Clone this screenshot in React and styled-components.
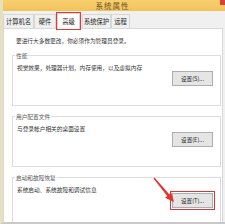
import React from 'react'
import styled, { createGlobalStyle } from 'styled-components'

const Global = createGlobalStyle`
    html, body { margin: 0; padding: 0; background: #f0f0f0; }
    body { font-family: "Noto Sans CJK SC", "Liberation Sans", sans-serif; }
`

const Window = styled.div`
    position: relative;
    width: 225px;
    height: 224px;
    overflow: hidden;
    box-sizing: border-box;
    border-left: 3px solid #e6e1bd;
    border-bottom: 2px solid #c9c9c9;
    background: #f0f0f0;
    display: flex;
    flex-direction: column;
`

const TitleBar = styled.div`
    height: 11px;
    flex-shrink: 0;
    margin-left: -3px;
    background: linear-gradient(#f7cf70, #f3c35a);
    display: flex;
    align-items: center;
    justify-content: center;
    position: relative;
    font-size: 7.5px;
    letter-spacing: 1px;
    color: #6b5226;
`

const Close = styled.div`
    position: absolute;
    right: 0;
    top: 0;
    width: 5px;
    height: 5px;
    background: #d8403a;
`

const TabBar = styled.div`
    height: 17px;
    flex-shrink: 0;
    display: flex;
    align-items: flex-end;
`

const Tab = styled.div`
    box-sizing: border-box;
    width: ${(p) => p.w}px;
    height: ${(p) => (p.active ? 16 : 14)}px;
    margin-bottom: ${(p) => (p.active ? -1 : 0)}px;
    margin-left: ${(p) => p.ml || 0}px;
    background: ${(p) => (p.active ? '#fff' : '#f0f0f0')};
    border: 1px solid #d6d6d6;
    border-bottom: none;
    outline: ${(p) => (p.active ? '1.5px solid #e23a35' : 'none')};
    display: flex;
    align-items: center;
    justify-content: center;
    font-size: 6.3px;
    color: #222;
    position: relative;
    z-index: ${(p) => (p.active ? 2 : 1)};
`

const Panel = styled.div`
    flex: 1;
    margin-right: 2px;
    background: #fff;
    border: 1px solid #d9d9d9;
    padding: 8px 1px 0 8px;
    display: flex;
    flex-direction: column;
`

const Intro = styled.div`
    font-size: 5.7px;
    line-height: 7px;
    margin-left: 4px;
    color: #333;
    white-space: nowrap;
`

const Group = styled.fieldset`
    box-sizing: border-box;
    height: 54px;
    margin: ${(p) => (p.first ? 8 : 7)}px 0 0 0;
    padding: 5px 7px 6px 4px;
    border: 1px solid #dcdcdc;
    display: flex;
    flex-direction: column;
    min-width: 0;
    flex-shrink: 0;
`

const Legend = styled.legend`
    font-size: 5.7px;
    line-height: 7px;
    padding: 0 1px;
    margin-left: -2px;
    color: #555;
`

const Desc = styled.div`
    font-size: 5.7px;
    line-height: 7px;
    color: #333;
    white-space: nowrap;
`

const Button = styled.div`
    box-sizing: border-box;
    margin-top: auto;
    align-self: flex-end;
    width: 41px;
    height: 15px;
    border: 1px solid #adadad;
    background: #e5e5e5;
    display: flex;
    align-items: center;
    justify-content: center;
    font-size: 5.6px;
    color: #222;
    outline: ${(p) => (p.marked ? '1.5px solid #d8363a' : 'none')};
    outline-offset: 1px;
`

const Arrow = styled.svg`
    position: absolute;
    left: 147px;
    top: 176px;
    width: 30px;
    height: 28px;
    overflow: visible;
`

const tabs = [
    { label: '计算机名', w: 31 },
    { label: '硬件', w: 22 },
    { label: '高级', w: 23, active: true, ml: 1 },
    { label: '系统保护', w: 29, ml: 2 },
    { label: '远程', w: 19 },
]

const groups = [
    { title: '性能', desc: '视觉效果，处理器计划，内存使用，以及虚拟内存', btn: '设置(S)...' },
    { title: '用户配置文件', desc: '与登录帐户相关的桌面设置', btn: '设置(E)...' },
    { title: '启动和故障恢复', desc: '系统启动、系统故障和调试信息', btn: '设置(T)...', marked: true },
]

const App = () => {
    return (
        <>
            <Global />
            <Window>
                <TitleBar>
                    系统属性
                    <Close />
                </TitleBar>
                <TabBar>
                    {tabs.map((t) => (
                        <Tab key={t.label} w={t.w} ml={t.ml} active={t.active}>{t.label}</Tab>
                    ))}
                </TabBar>
                <Panel>
                    <Intro>要进行大多数更改，你必须作为管理员登录。</Intro>
                    {groups.map((g, i) => (
                        <Group key={g.title} first={i === 0}>
                            <Legend>{g.title}</Legend>
                            <Desc>{g.desc}</Desc>
                            <Button marked={g.marked}>{g.btn}</Button>
                        </Group>
                    ))}
                </Panel>
                <Arrow viewBox="0 0 30 28">
                    <polygon points="3.5,2.5 4.5,1.6 19.2,18.3 21.3,16.5 24,26 15.1,21.7 17.2,19.9" fill="#e5302c" />
                </Arrow>
            </Window>
        </>
    )
}

export default App
